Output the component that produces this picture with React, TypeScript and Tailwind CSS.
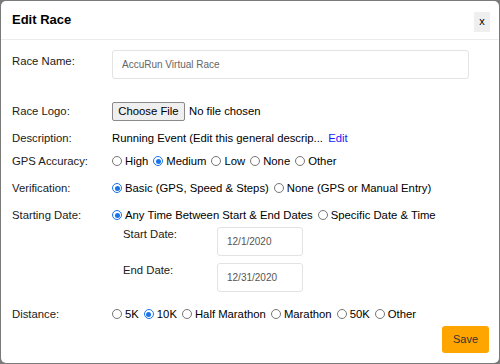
import React from "react";

function Radio({ checked }: { checked?: boolean }) {
  return checked ? (
    <span className="inline-block w-[10px] h-[10px] rounded-full border border-[#1a73e8] bg-white relative shrink-0 mr-[3px]">
      <span className="absolute left-[1.5px] top-[1.5px] w-[5px] h-[5px] rounded-full bg-[#1a73e8]" />
    </span>
  ) : (
    <span className="inline-block w-[10px] h-[10px] rounded-full border border-[#767676] bg-white shrink-0 mr-[3px]" />
  );
}

function Opt({ label, checked }: { label: string; checked?: boolean }) {
  return (
    <span className="inline-flex items-center mr-[5px]">
      <Radio checked={checked} />
      <span>{label}</span>
    </span>
  );
}

export default function App() {
  return (
    <div
      className="w-[500px] h-[364px] bg-[#7a7a7a] p-[1px] overflow-hidden"
      style={{ fontFamily: '"Liberation Sans", Arial, sans-serif' }}
    >
      <div className="w-full h-full bg-white rounded-[5px] flex flex-col text-[11.3px] text-[#212121]">
        <div className="h-[39px] border-b border-[#ececec] flex items-center justify-between pl-[11px] pr-[9px] shrink-0">
          <div className="text-[13px] font-bold text-black">Edit Race</div>
          <div className="w-[16px] h-[20px] bg-[#efefef] flex items-center justify-center text-[11px] text-black mt-[3px]">
            x
          </div>
        </div>
        <div className="flex flex-col pl-[11px] pr-[10px]">
          <div className="flex items-start mt-[10px]">
            <div className="w-[100px] pt-[3px]">Race Name:</div>
            <div className="w-[357px] h-[29px] border border-[#e3e3e3] rounded-[3px] flex items-center pl-[9px] text-[10px] text-[#666]">
              AccuRun Virtual Race
            </div>
          </div>
          <div className="flex items-center mt-[23px] h-[19px]">
            <div className="w-[100px]">Race Logo:</div>
            <div className="flex items-center">
              <div className="w-[73px] h-[19px] border border-[#8a8a8a] rounded-[2px] bg-[#efefef] flex items-center justify-center text-black">
                Choose File
              </div>
              <span className="ml-[4px] text-black">No file chosen</span>
            </div>
          </div>
          <div className="flex items-center mt-[8px] h-[18px]">
            <div className="w-[100px]">Description:</div>
            <div className="text-black">
              Running Event (Edit this general descrip...{" "}
              <span className="text-[#1a1aff] ml-[2px]">Edit</span>
            </div>
          </div>
          <div className="flex items-center mt-[5px] h-[18px]">
            <div className="w-[100px]">GPS Accuracy:</div>
            <div className="flex items-center text-black">
              <Opt label="High" />
              <Opt label="Medium" checked />
              <Opt label="Low" />
              <Opt label="None" />
              <Opt label="Other" />
            </div>
          </div>
          <div className="flex items-center mt-[9px] h-[18px]">
            <div className="w-[100px]">Verification:</div>
            <div className="flex items-center text-black">
              <Opt label="Basic (GPS, Speed & Steps)" checked />
              <Opt label="None (GPS or Manual Entry)" />
            </div>
          </div>
          <div className="flex items-center mt-[9px] h-[18px]">
            <div className="w-[100px]">Starting Date:</div>
            <div className="flex items-center text-black">
              <Opt label="Any Time Between Start & End Dates" checked />
              <Opt label="Specific Date & Time" />
            </div>
          </div>
          <div className="flex items-start mt-[3px] pl-[111px]">
            <div className="w-[94px] pt-0 -mt-[1px]">Start Date:</div>
            <div className="w-[86px] h-[29px] border border-[#e3e3e3] rounded-[3px] flex items-center pl-[9px] text-[10px] text-[#555]">
              12/1/2020
            </div>
          </div>
          <div className="flex items-start mt-[7px] pl-[111px]">
            <div className="w-[94px] pt-0 -mt-[1px]">End Date:</div>
            <div className="w-[86px] h-[29px] border border-[#e3e3e3] rounded-[3px] flex items-center pl-[9px] text-[10px] text-[#555]">
              12/31/2020
            </div>
          </div>
          <div className="flex items-center mt-[13px] h-[18px]">
            <div className="w-[100px]">Distance:</div>
            <div className="flex items-center text-black">
              <Opt label="5K" />
              <Opt label="10K" checked />
              <Opt label="Half Marathon" />
              <Opt label="Marathon" />
              <Opt label="50K" />
              <Opt label="Other" />
            </div>
          </div>
          <div className="flex justify-end mt-[3px]">
            <div className="w-[47px] h-[27px] bg-[#ffa500] rounded-[3px] flex items-center justify-center text-[11px] text-[#333]">
              Save
            </div>
          </div>
        </div>
      </div>
    </div>
  );
}
